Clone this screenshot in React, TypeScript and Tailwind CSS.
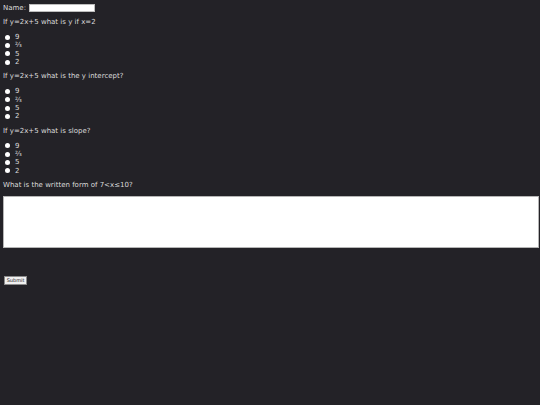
const questions = [
  'If y=2x+5 what is y if x=2',
  'If y=2x+5 what is the y intercept?',
  'If y=2x+5 what is slope?',
]

const options = ['9', '⅔', '5', '2']

function Option({ label }: { label: string }) {
  return (
    <div className="flex items-center h-[8.33px]">
      <span className="ml-[2px] w-[5px] h-[5px] rounded-full bg-white shrink-0" />
      <span className="ml-[5px]">{label}</span>
    </div>
  )
}

export default function App() {
  return (
    <div
      className="min-h-screen w-full bg-[#232227] text-[#dcdcdc] text-[7px] leading-[8px] pl-[3px] pt-[3px] antialiased"
      style={{ fontFamily: '"DejaVu Sans", sans-serif' }}
    >
      <div className="flex items-center h-[9px]">
        <span>Name:</span>
        <input className="ml-[3px] w-[66px] h-[8px] bg-white border border-[#bdbdbd] outline-none" />
      </div>

      {questions.map((q, i) => (
        <div key={i} className="mt-[6px]">
          <p className="h-[8px]">{q}</p>
          <div className="mt-[7px]">
            {options.map((o) => (
              <Option key={o} label={o} />
            ))}
          </div>
        </div>
      ))}

      <p className="mt-[6px] h-[8px]">What is the written form of 7&lt;x≤10?</p>
      <textarea className="block mt-[7px] w-[536px] h-[52px] bg-white border border-[#b5b5b5] resize-none outline-none" />

      <button className="block mt-[28px] ml-[1px] w-[23px] h-[9px] bg-[#f0f0f0] border border-[#8a8a8a] text-[#222] text-[5px] leading-[7px] text-center">
        Submit
      </button>
    </div>
  )
}
